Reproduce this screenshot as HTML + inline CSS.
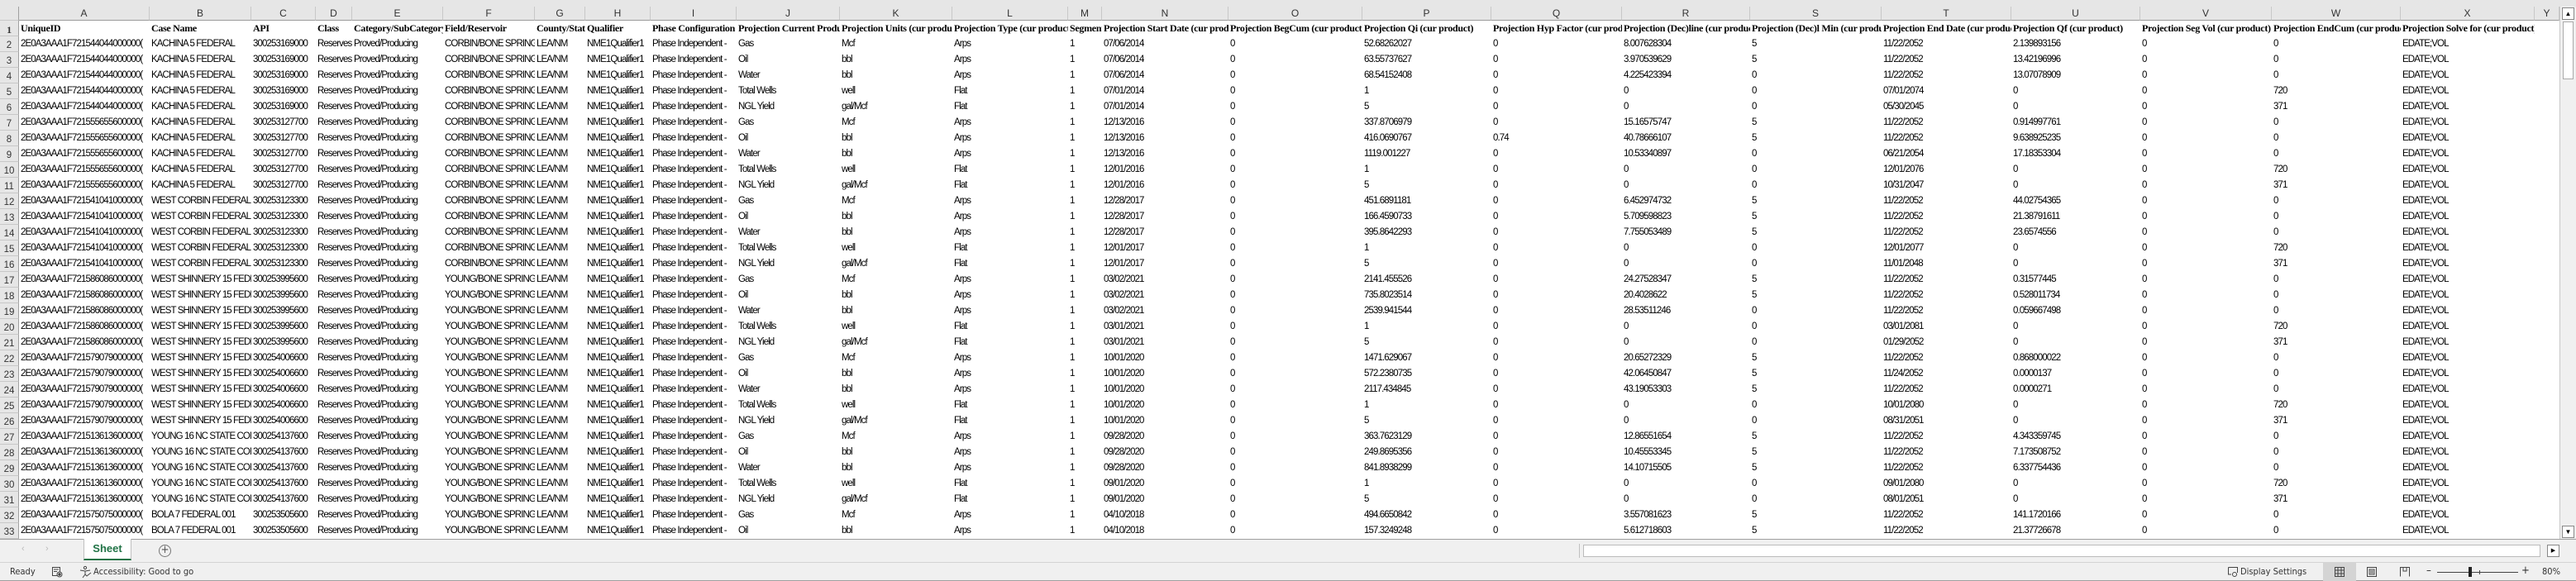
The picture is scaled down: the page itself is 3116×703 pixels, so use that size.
<!DOCTYPE html>
<html><head><meta charset="utf-8">
<style>
*{margin:0;padding:0;box-sizing:border-box}
html,body{width:3116px;height:703px;overflow:hidden;background:#fff;font-family:"Liberation Sans Narrow","Liberation Sans",sans-serif;font-stretch:condensed}
.top{position:absolute;left:0;top:0;width:3116px;height:8px;background:#e6e6e6}
.r{position:absolute;left:0;height:19px;display:flex;white-space:nowrap}
.r>div{overflow:hidden;height:19px;line-height:18px;font-size:11.5px;color:#000;padding-left:2px;letter-spacing:-0.9px}
.r>div:first-child{background:#e6e6e6;border-right:1px solid #a0a0a0;border-bottom:1px solid #c8c8c8;text-align:center;color:#333;padding:0;font-size:11.5px;line-height:22px;letter-spacing:0}
.hdr{top:8px;height:17px}
.hdr>div{background:#e6e6e6;text-align:center;border-right:1px solid #c8c8c8;border-bottom:1px solid #9b9b9b;height:17px!important;line-height:17px!important;font-size:12px!important;color:#333!important;padding:0!important;letter-spacing:0!important}
.h1>div{font-family:"Liberation Serif",serif;font-weight:bold;font-size:12px!important;font-stretch:normal;letter-spacing:-0.3px!important}
.c0{width:23px}.cA{width:158px}.cB{width:123px}.cC{width:78px}.cD{width:44px}.cE{width:110px}.cF{width:111px}.cG{width:61px}.cH{width:79px}.cI{width:104px}.cJ{width:125px}.cK{width:136px}.cL{width:140px}.cM{width:41px}.cN{width:153px}.cO{width:162px}.cP{width:156px}.cQ{width:158px}.cR{width:155px}.cS{width:159px}.cT{width:157px}.cU{width:156px}.cV{width:159px}.cW{width:156px}.cX{width:162px}.cY{width:30px}
.vs{position:absolute;left:3096px;top:8px;width:20px;height:644px;background:#f0f0f0;border-left:1px solid #c8c8c8}
.vs .b{position:absolute;left:2px;width:15px;height:15px;border:1px solid #888;background:#fff;font-size:8px;text-align:center;line-height:13px}
.tabbar{position:absolute;left:0;top:652px;width:3116px;height:28px;background:#f0f0f0;border-top:1px solid #a0a0a0}
.status{position:absolute;left:0;top:680px;width:3116px;height:23px;background:#f0f0f0;border-top:1px solid #d4d4d4;font-family:"DejaVu Sans",sans-serif;font-size:11px;color:#333;border-bottom:1px solid #a0a0a0}
.status span{position:absolute;top:4px}
</style></head><body>
<div class="top"></div>
<div class="r hdr"><div class="c0"></div><div class="cA">A</div><div class="cB">B</div><div class="cC">C</div><div class="cD">D</div><div class="cE">E</div><div class="cF">F</div><div class="cG">G</div><div class="cH">H</div><div class="cI">I</div><div class="cJ">J</div><div class="cK">K</div><div class="cL">L</div><div class="cM">M</div><div class="cN">N</div><div class="cO">O</div><div class="cP">P</div><div class="cQ">Q</div><div class="cR">R</div><div class="cS">S</div><div class="cT">T</div><div class="cU">U</div><div class="cV">V</div><div class="cW">W</div><div class="cX">X</div><div class="cY">Y</div></div>
<div class="r h1" style="top:25px"><div class="c0">1</div><div class="cA">UniqueID</div><div class="cB">Case Name</div><div class="cC">API</div><div class="cD">Class</div><div class="cE">Category/SubCategory</div><div class="cF">Field/Reservoir</div><div class="cG">County/State</div><div class="cH">Qualifier</div><div class="cI">Phase Configuration</div><div class="cJ">Projection Current Product</div><div class="cK">Projection Units (cur product)</div><div class="cL">Projection Type (cur product)</div><div class="cM">Segment</div><div class="cN">Projection Start Date (cur product)</div><div class="cO">Projection BegCum (cur product)</div><div class="cP">Projection Qi (cur product)</div><div class="cQ">Projection Hyp Factor (cur product)</div><div class="cR">Projection (Dec)line (cur product)</div><div class="cS">Projection (Dec)l Min (cur product)</div><div class="cT">Projection End Date (cur product)</div><div class="cU">Projection Qf (cur product)</div><div class="cV">Projection Seg Vol (cur product)</div><div class="cW">Projection EndCum (cur product)</div><div class="cX">Projection Solve for (cur product)</div><div class="cY"></div></div>

<div class="r" style="top:44px"><div class="c0">2</div><div class="cA">2E0A3AAA1F721544044000000(</div><div class="cB">KACHINA 5 FEDERAL</div><div class="cC">300253169000</div><div class="cD">Reserves</div><div class="cE">Proved/Producing</div><div class="cF">CORBIN/BONE SPRING</div><div class="cG">LEA/NM</div><div class="cH">NME1Qualifier1</div><div class="cI">Phase Independent - </div><div class="cJ">Gas</div><div class="cK">Mcf</div><div class="cL">Arps</div><div class="cM">1</div><div class="cN">07/06/2014</div><div class="cO">0</div><div class="cP">52.68262027</div><div class="cQ">0</div><div class="cR">8.007628304</div><div class="cS">5</div><div class="cT">11/22/2052</div><div class="cU">2.139893156</div><div class="cV">0</div><div class="cW">0</div><div class="cX">EDATE;VOL</div></div>
<div class="r" style="top:63px"><div class="c0">3</div><div class="cA">2E0A3AAA1F721544044000000(</div><div class="cB">KACHINA 5 FEDERAL</div><div class="cC">300253169000</div><div class="cD">Reserves</div><div class="cE">Proved/Producing</div><div class="cF">CORBIN/BONE SPRING</div><div class="cG">LEA/NM</div><div class="cH">NME1Qualifier1</div><div class="cI">Phase Independent - </div><div class="cJ">Oil</div><div class="cK">bbl</div><div class="cL">Arps</div><div class="cM">1</div><div class="cN">07/06/2014</div><div class="cO">0</div><div class="cP">63.55737627</div><div class="cQ">0</div><div class="cR">3.970539629</div><div class="cS">5</div><div class="cT">11/22/2052</div><div class="cU">13.42196996</div><div class="cV">0</div><div class="cW">0</div><div class="cX">EDATE;VOL</div></div>
<div class="r" style="top:82px"><div class="c0">4</div><div class="cA">2E0A3AAA1F721544044000000(</div><div class="cB">KACHINA 5 FEDERAL</div><div class="cC">300253169000</div><div class="cD">Reserves</div><div class="cE">Proved/Producing</div><div class="cF">CORBIN/BONE SPRING</div><div class="cG">LEA/NM</div><div class="cH">NME1Qualifier1</div><div class="cI">Phase Independent - </div><div class="cJ">Water</div><div class="cK">bbl</div><div class="cL">Arps</div><div class="cM">1</div><div class="cN">07/06/2014</div><div class="cO">0</div><div class="cP">68.54152408</div><div class="cQ">0</div><div class="cR">4.225423394</div><div class="cS">0</div><div class="cT">11/22/2052</div><div class="cU">13.07078909</div><div class="cV">0</div><div class="cW">0</div><div class="cX">EDATE;VOL</div></div>
<div class="r" style="top:101px"><div class="c0">5</div><div class="cA">2E0A3AAA1F721544044000000(</div><div class="cB">KACHINA 5 FEDERAL</div><div class="cC">300253169000</div><div class="cD">Reserves</div><div class="cE">Proved/Producing</div><div class="cF">CORBIN/BONE SPRING</div><div class="cG">LEA/NM</div><div class="cH">NME1Qualifier1</div><div class="cI">Phase Independent - </div><div class="cJ">Total Wells</div><div class="cK">well</div><div class="cL">Flat</div><div class="cM">1</div><div class="cN">07/01/2014</div><div class="cO">0</div><div class="cP">1</div><div class="cQ">0</div><div class="cR">0</div><div class="cS">0</div><div class="cT">07/01/2074</div><div class="cU">0</div><div class="cV">0</div><div class="cW">720</div><div class="cX">EDATE;VOL</div></div>
<div class="r" style="top:120px"><div class="c0">6</div><div class="cA">2E0A3AAA1F721544044000000(</div><div class="cB">KACHINA 5 FEDERAL</div><div class="cC">300253169000</div><div class="cD">Reserves</div><div class="cE">Proved/Producing</div><div class="cF">CORBIN/BONE SPRING</div><div class="cG">LEA/NM</div><div class="cH">NME1Qualifier1</div><div class="cI">Phase Independent - </div><div class="cJ">NGL Yield</div><div class="cK">gal/Mcf</div><div class="cL">Flat</div><div class="cM">1</div><div class="cN">07/01/2014</div><div class="cO">0</div><div class="cP">5</div><div class="cQ">0</div><div class="cR">0</div><div class="cS">0</div><div class="cT">05/30/2045</div><div class="cU">0</div><div class="cV">0</div><div class="cW">371</div><div class="cX">EDATE;VOL</div></div>
<div class="r" style="top:139px"><div class="c0">7</div><div class="cA">2E0A3AAA1F721555655600000(</div><div class="cB">KACHINA 5 FEDERAL</div><div class="cC">300253127700</div><div class="cD">Reserves</div><div class="cE">Proved/Producing</div><div class="cF">CORBIN/BONE SPRING</div><div class="cG">LEA/NM</div><div class="cH">NME1Qualifier1</div><div class="cI">Phase Independent - </div><div class="cJ">Gas</div><div class="cK">Mcf</div><div class="cL">Arps</div><div class="cM">1</div><div class="cN">12/13/2016</div><div class="cO">0</div><div class="cP">337.8706979</div><div class="cQ">0</div><div class="cR">15.16575747</div><div class="cS">5</div><div class="cT">11/22/2052</div><div class="cU">0.914997761</div><div class="cV">0</div><div class="cW">0</div><div class="cX">EDATE;VOL</div></div>
<div class="r" style="top:158px"><div class="c0">8</div><div class="cA">2E0A3AAA1F721555655600000(</div><div class="cB">KACHINA 5 FEDERAL</div><div class="cC">300253127700</div><div class="cD">Reserves</div><div class="cE">Proved/Producing</div><div class="cF">CORBIN/BONE SPRING</div><div class="cG">LEA/NM</div><div class="cH">NME1Qualifier1</div><div class="cI">Phase Independent - </div><div class="cJ">Oil</div><div class="cK">bbl</div><div class="cL">Arps</div><div class="cM">1</div><div class="cN">12/13/2016</div><div class="cO">0</div><div class="cP">416.0690767</div><div class="cQ">0.74</div><div class="cR">40.78666107</div><div class="cS">5</div><div class="cT">11/22/2052</div><div class="cU">9.638925235</div><div class="cV">0</div><div class="cW">0</div><div class="cX">EDATE;VOL</div></div>
<div class="r" style="top:177px"><div class="c0">9</div><div class="cA">2E0A3AAA1F721555655600000(</div><div class="cB">KACHINA 5 FEDERAL</div><div class="cC">300253127700</div><div class="cD">Reserves</div><div class="cE">Proved/Producing</div><div class="cF">CORBIN/BONE SPRING</div><div class="cG">LEA/NM</div><div class="cH">NME1Qualifier1</div><div class="cI">Phase Independent - </div><div class="cJ">Water</div><div class="cK">bbl</div><div class="cL">Arps</div><div class="cM">1</div><div class="cN">12/13/2016</div><div class="cO">0</div><div class="cP">1119.001227</div><div class="cQ">0</div><div class="cR">10.53340897</div><div class="cS">0</div><div class="cT">06/21/2054</div><div class="cU">17.18353304</div><div class="cV">0</div><div class="cW">0</div><div class="cX">EDATE;VOL</div></div>
<div class="r" style="top:196px"><div class="c0">10</div><div class="cA">2E0A3AAA1F721555655600000(</div><div class="cB">KACHINA 5 FEDERAL</div><div class="cC">300253127700</div><div class="cD">Reserves</div><div class="cE">Proved/Producing</div><div class="cF">CORBIN/BONE SPRING</div><div class="cG">LEA/NM</div><div class="cH">NME1Qualifier1</div><div class="cI">Phase Independent - </div><div class="cJ">Total Wells</div><div class="cK">well</div><div class="cL">Flat</div><div class="cM">1</div><div class="cN">12/01/2016</div><div class="cO">0</div><div class="cP">1</div><div class="cQ">0</div><div class="cR">0</div><div class="cS">0</div><div class="cT">12/01/2076</div><div class="cU">0</div><div class="cV">0</div><div class="cW">720</div><div class="cX">EDATE;VOL</div></div>
<div class="r" style="top:215px"><div class="c0">11</div><div class="cA">2E0A3AAA1F721555655600000(</div><div class="cB">KACHINA 5 FEDERAL</div><div class="cC">300253127700</div><div class="cD">Reserves</div><div class="cE">Proved/Producing</div><div class="cF">CORBIN/BONE SPRING</div><div class="cG">LEA/NM</div><div class="cH">NME1Qualifier1</div><div class="cI">Phase Independent - </div><div class="cJ">NGL Yield</div><div class="cK">gal/Mcf</div><div class="cL">Flat</div><div class="cM">1</div><div class="cN">12/01/2016</div><div class="cO">0</div><div class="cP">5</div><div class="cQ">0</div><div class="cR">0</div><div class="cS">0</div><div class="cT">10/31/2047</div><div class="cU">0</div><div class="cV">0</div><div class="cW">371</div><div class="cX">EDATE;VOL</div></div>
<div class="r" style="top:234px"><div class="c0">12</div><div class="cA">2E0A3AAA1F721541041000000(</div><div class="cB">WEST CORBIN FEDERAL</div><div class="cC">300253123300</div><div class="cD">Reserves</div><div class="cE">Proved/Producing</div><div class="cF">CORBIN/BONE SPRING</div><div class="cG">LEA/NM</div><div class="cH">NME1Qualifier1</div><div class="cI">Phase Independent - </div><div class="cJ">Gas</div><div class="cK">Mcf</div><div class="cL">Arps</div><div class="cM">1</div><div class="cN">12/28/2017</div><div class="cO">0</div><div class="cP">451.6891181</div><div class="cQ">0</div><div class="cR">6.452974732</div><div class="cS">5</div><div class="cT">11/22/2052</div><div class="cU">44.02754365</div><div class="cV">0</div><div class="cW">0</div><div class="cX">EDATE;VOL</div></div>
<div class="r" style="top:253px"><div class="c0">13</div><div class="cA">2E0A3AAA1F721541041000000(</div><div class="cB">WEST CORBIN FEDERAL</div><div class="cC">300253123300</div><div class="cD">Reserves</div><div class="cE">Proved/Producing</div><div class="cF">CORBIN/BONE SPRING</div><div class="cG">LEA/NM</div><div class="cH">NME1Qualifier1</div><div class="cI">Phase Independent - </div><div class="cJ">Oil</div><div class="cK">bbl</div><div class="cL">Arps</div><div class="cM">1</div><div class="cN">12/28/2017</div><div class="cO">0</div><div class="cP">166.4590733</div><div class="cQ">0</div><div class="cR">5.709598823</div><div class="cS">5</div><div class="cT">11/22/2052</div><div class="cU">21.38791611</div><div class="cV">0</div><div class="cW">0</div><div class="cX">EDATE;VOL</div></div>
<div class="r" style="top:272px"><div class="c0">14</div><div class="cA">2E0A3AAA1F721541041000000(</div><div class="cB">WEST CORBIN FEDERAL</div><div class="cC">300253123300</div><div class="cD">Reserves</div><div class="cE">Proved/Producing</div><div class="cF">CORBIN/BONE SPRING</div><div class="cG">LEA/NM</div><div class="cH">NME1Qualifier1</div><div class="cI">Phase Independent - </div><div class="cJ">Water</div><div class="cK">bbl</div><div class="cL">Arps</div><div class="cM">1</div><div class="cN">12/28/2017</div><div class="cO">0</div><div class="cP">395.8642293</div><div class="cQ">0</div><div class="cR">7.755053489</div><div class="cS">5</div><div class="cT">11/22/2052</div><div class="cU">23.6574556</div><div class="cV">0</div><div class="cW">0</div><div class="cX">EDATE;VOL</div></div>
<div class="r" style="top:291px"><div class="c0">15</div><div class="cA">2E0A3AAA1F721541041000000(</div><div class="cB">WEST CORBIN FEDERAL</div><div class="cC">300253123300</div><div class="cD">Reserves</div><div class="cE">Proved/Producing</div><div class="cF">CORBIN/BONE SPRING</div><div class="cG">LEA/NM</div><div class="cH">NME1Qualifier1</div><div class="cI">Phase Independent - </div><div class="cJ">Total Wells</div><div class="cK">well</div><div class="cL">Flat</div><div class="cM">1</div><div class="cN">12/01/2017</div><div class="cO">0</div><div class="cP">1</div><div class="cQ">0</div><div class="cR">0</div><div class="cS">0</div><div class="cT">12/01/2077</div><div class="cU">0</div><div class="cV">0</div><div class="cW">720</div><div class="cX">EDATE;VOL</div></div>
<div class="r" style="top:310px"><div class="c0">16</div><div class="cA">2E0A3AAA1F721541041000000(</div><div class="cB">WEST CORBIN FEDERAL</div><div class="cC">300253123300</div><div class="cD">Reserves</div><div class="cE">Proved/Producing</div><div class="cF">CORBIN/BONE SPRING</div><div class="cG">LEA/NM</div><div class="cH">NME1Qualifier1</div><div class="cI">Phase Independent - </div><div class="cJ">NGL Yield</div><div class="cK">gal/Mcf</div><div class="cL">Flat</div><div class="cM">1</div><div class="cN">12/01/2017</div><div class="cO">0</div><div class="cP">5</div><div class="cQ">0</div><div class="cR">0</div><div class="cS">0</div><div class="cT">11/01/2048</div><div class="cU">0</div><div class="cV">0</div><div class="cW">371</div><div class="cX">EDATE;VOL</div></div>
<div class="r" style="top:329px"><div class="c0">17</div><div class="cA">2E0A3AAA1F721586086000000(</div><div class="cB">WEST SHINNERY 15 FEDERAL</div><div class="cC">300253995600</div><div class="cD">Reserves</div><div class="cE">Proved/Producing</div><div class="cF">YOUNG/BONE SPRING</div><div class="cG">LEA/NM</div><div class="cH">NME1Qualifier1</div><div class="cI">Phase Independent - </div><div class="cJ">Gas</div><div class="cK">Mcf</div><div class="cL">Arps</div><div class="cM">1</div><div class="cN">03/02/2021</div><div class="cO">0</div><div class="cP">2141.455526</div><div class="cQ">0</div><div class="cR">24.27528347</div><div class="cS">5</div><div class="cT">11/22/2052</div><div class="cU">0.31577445</div><div class="cV">0</div><div class="cW">0</div><div class="cX">EDATE;VOL</div></div>
<div class="r" style="top:348px"><div class="c0">18</div><div class="cA">2E0A3AAA1F721586086000000(</div><div class="cB">WEST SHINNERY 15 FEDERAL</div><div class="cC">300253995600</div><div class="cD">Reserves</div><div class="cE">Proved/Producing</div><div class="cF">YOUNG/BONE SPRING</div><div class="cG">LEA/NM</div><div class="cH">NME1Qualifier1</div><div class="cI">Phase Independent - </div><div class="cJ">Oil</div><div class="cK">bbl</div><div class="cL">Arps</div><div class="cM">1</div><div class="cN">03/02/2021</div><div class="cO">0</div><div class="cP">735.8023514</div><div class="cQ">0</div><div class="cR">20.4028622</div><div class="cS">5</div><div class="cT">11/22/2052</div><div class="cU">0.528011734</div><div class="cV">0</div><div class="cW">0</div><div class="cX">EDATE;VOL</div></div>
<div class="r" style="top:367px"><div class="c0">19</div><div class="cA">2E0A3AAA1F721586086000000(</div><div class="cB">WEST SHINNERY 15 FEDERAL</div><div class="cC">300253995600</div><div class="cD">Reserves</div><div class="cE">Proved/Producing</div><div class="cF">YOUNG/BONE SPRING</div><div class="cG">LEA/NM</div><div class="cH">NME1Qualifier1</div><div class="cI">Phase Independent - </div><div class="cJ">Water</div><div class="cK">bbl</div><div class="cL">Arps</div><div class="cM">1</div><div class="cN">03/02/2021</div><div class="cO">0</div><div class="cP">2539.941544</div><div class="cQ">0</div><div class="cR">28.53511246</div><div class="cS">0</div><div class="cT">11/22/2052</div><div class="cU">0.059667498</div><div class="cV">0</div><div class="cW">0</div><div class="cX">EDATE;VOL</div></div>
<div class="r" style="top:386px"><div class="c0">20</div><div class="cA">2E0A3AAA1F721586086000000(</div><div class="cB">WEST SHINNERY 15 FEDERAL</div><div class="cC">300253995600</div><div class="cD">Reserves</div><div class="cE">Proved/Producing</div><div class="cF">YOUNG/BONE SPRING</div><div class="cG">LEA/NM</div><div class="cH">NME1Qualifier1</div><div class="cI">Phase Independent - </div><div class="cJ">Total Wells</div><div class="cK">well</div><div class="cL">Flat</div><div class="cM">1</div><div class="cN">03/01/2021</div><div class="cO">0</div><div class="cP">1</div><div class="cQ">0</div><div class="cR">0</div><div class="cS">0</div><div class="cT">03/01/2081</div><div class="cU">0</div><div class="cV">0</div><div class="cW">720</div><div class="cX">EDATE;VOL</div></div>
<div class="r" style="top:405px"><div class="c0">21</div><div class="cA">2E0A3AAA1F721586086000000(</div><div class="cB">WEST SHINNERY 15 FEDERAL</div><div class="cC">300253995600</div><div class="cD">Reserves</div><div class="cE">Proved/Producing</div><div class="cF">YOUNG/BONE SPRING</div><div class="cG">LEA/NM</div><div class="cH">NME1Qualifier1</div><div class="cI">Phase Independent - </div><div class="cJ">NGL Yield</div><div class="cK">gal/Mcf</div><div class="cL">Flat</div><div class="cM">1</div><div class="cN">03/01/2021</div><div class="cO">0</div><div class="cP">5</div><div class="cQ">0</div><div class="cR">0</div><div class="cS">0</div><div class="cT">01/29/2052</div><div class="cU">0</div><div class="cV">0</div><div class="cW">371</div><div class="cX">EDATE;VOL</div></div>
<div class="r" style="top:424px"><div class="c0">22</div><div class="cA">2E0A3AAA1F721579079000000(</div><div class="cB">WEST SHINNERY 15 FEDERAL</div><div class="cC">300254006600</div><div class="cD">Reserves</div><div class="cE">Proved/Producing</div><div class="cF">YOUNG/BONE SPRING</div><div class="cG">LEA/NM</div><div class="cH">NME1Qualifier1</div><div class="cI">Phase Independent - </div><div class="cJ">Gas</div><div class="cK">Mcf</div><div class="cL">Arps</div><div class="cM">1</div><div class="cN">10/01/2020</div><div class="cO">0</div><div class="cP">1471.629067</div><div class="cQ">0</div><div class="cR">20.65272329</div><div class="cS">5</div><div class="cT">11/22/2052</div><div class="cU">0.868000022</div><div class="cV">0</div><div class="cW">0</div><div class="cX">EDATE;VOL</div></div>
<div class="r" style="top:443px"><div class="c0">23</div><div class="cA">2E0A3AAA1F721579079000000(</div><div class="cB">WEST SHINNERY 15 FEDERAL</div><div class="cC">300254006600</div><div class="cD">Reserves</div><div class="cE">Proved/Producing</div><div class="cF">YOUNG/BONE SPRING</div><div class="cG">LEA/NM</div><div class="cH">NME1Qualifier1</div><div class="cI">Phase Independent - </div><div class="cJ">Oil</div><div class="cK">bbl</div><div class="cL">Arps</div><div class="cM">1</div><div class="cN">10/01/2020</div><div class="cO">0</div><div class="cP">572.2380735</div><div class="cQ">0</div><div class="cR">42.06450847</div><div class="cS">5</div><div class="cT">11/24/2052</div><div class="cU">0.0000137</div><div class="cV">0</div><div class="cW">0</div><div class="cX">EDATE;VOL</div></div>
<div class="r" style="top:462px"><div class="c0">24</div><div class="cA">2E0A3AAA1F721579079000000(</div><div class="cB">WEST SHINNERY 15 FEDERAL</div><div class="cC">300254006600</div><div class="cD">Reserves</div><div class="cE">Proved/Producing</div><div class="cF">YOUNG/BONE SPRING</div><div class="cG">LEA/NM</div><div class="cH">NME1Qualifier1</div><div class="cI">Phase Independent - </div><div class="cJ">Water</div><div class="cK">bbl</div><div class="cL">Arps</div><div class="cM">1</div><div class="cN">10/01/2020</div><div class="cO">0</div><div class="cP">2117.434845</div><div class="cQ">0</div><div class="cR">43.19053303</div><div class="cS">5</div><div class="cT">11/22/2052</div><div class="cU">0.0000271</div><div class="cV">0</div><div class="cW">0</div><div class="cX">EDATE;VOL</div></div>
<div class="r" style="top:481px"><div class="c0">25</div><div class="cA">2E0A3AAA1F721579079000000(</div><div class="cB">WEST SHINNERY 15 FEDERAL</div><div class="cC">300254006600</div><div class="cD">Reserves</div><div class="cE">Proved/Producing</div><div class="cF">YOUNG/BONE SPRING</div><div class="cG">LEA/NM</div><div class="cH">NME1Qualifier1</div><div class="cI">Phase Independent - </div><div class="cJ">Total Wells</div><div class="cK">well</div><div class="cL">Flat</div><div class="cM">1</div><div class="cN">10/01/2020</div><div class="cO">0</div><div class="cP">1</div><div class="cQ">0</div><div class="cR">0</div><div class="cS">0</div><div class="cT">10/01/2080</div><div class="cU">0</div><div class="cV">0</div><div class="cW">720</div><div class="cX">EDATE;VOL</div></div>
<div class="r" style="top:500px"><div class="c0">26</div><div class="cA">2E0A3AAA1F721579079000000(</div><div class="cB">WEST SHINNERY 15 FEDERAL</div><div class="cC">300254006600</div><div class="cD">Reserves</div><div class="cE">Proved/Producing</div><div class="cF">YOUNG/BONE SPRING</div><div class="cG">LEA/NM</div><div class="cH">NME1Qualifier1</div><div class="cI">Phase Independent - </div><div class="cJ">NGL Yield</div><div class="cK">gal/Mcf</div><div class="cL">Flat</div><div class="cM">1</div><div class="cN">10/01/2020</div><div class="cO">0</div><div class="cP">5</div><div class="cQ">0</div><div class="cR">0</div><div class="cS">0</div><div class="cT">08/31/2051</div><div class="cU">0</div><div class="cV">0</div><div class="cW">371</div><div class="cX">EDATE;VOL</div></div>
<div class="r" style="top:519px"><div class="c0">27</div><div class="cA">2E0A3AAA1F721513613600000(</div><div class="cB">YOUNG 16 NC STATE COM</div><div class="cC">300254137600</div><div class="cD">Reserves</div><div class="cE">Proved/Producing</div><div class="cF">YOUNG/BONE SPRING</div><div class="cG">LEA/NM</div><div class="cH">NME1Qualifier1</div><div class="cI">Phase Independent - </div><div class="cJ">Gas</div><div class="cK">Mcf</div><div class="cL">Arps</div><div class="cM">1</div><div class="cN">09/28/2020</div><div class="cO">0</div><div class="cP">363.7623129</div><div class="cQ">0</div><div class="cR">12.86551654</div><div class="cS">5</div><div class="cT">11/22/2052</div><div class="cU">4.343359745</div><div class="cV">0</div><div class="cW">0</div><div class="cX">EDATE;VOL</div></div>
<div class="r" style="top:538px"><div class="c0">28</div><div class="cA">2E0A3AAA1F721513613600000(</div><div class="cB">YOUNG 16 NC STATE COM</div><div class="cC">300254137600</div><div class="cD">Reserves</div><div class="cE">Proved/Producing</div><div class="cF">YOUNG/BONE SPRING</div><div class="cG">LEA/NM</div><div class="cH">NME1Qualifier1</div><div class="cI">Phase Independent - </div><div class="cJ">Oil</div><div class="cK">bbl</div><div class="cL">Arps</div><div class="cM">1</div><div class="cN">09/28/2020</div><div class="cO">0</div><div class="cP">249.8695356</div><div class="cQ">0</div><div class="cR">10.45553345</div><div class="cS">5</div><div class="cT">11/22/2052</div><div class="cU">7.173508752</div><div class="cV">0</div><div class="cW">0</div><div class="cX">EDATE;VOL</div></div>
<div class="r" style="top:557px"><div class="c0">29</div><div class="cA">2E0A3AAA1F721513613600000(</div><div class="cB">YOUNG 16 NC STATE COM</div><div class="cC">300254137600</div><div class="cD">Reserves</div><div class="cE">Proved/Producing</div><div class="cF">YOUNG/BONE SPRING</div><div class="cG">LEA/NM</div><div class="cH">NME1Qualifier1</div><div class="cI">Phase Independent - </div><div class="cJ">Water</div><div class="cK">bbl</div><div class="cL">Arps</div><div class="cM">1</div><div class="cN">09/28/2020</div><div class="cO">0</div><div class="cP">841.8938299</div><div class="cQ">0</div><div class="cR">14.10715505</div><div class="cS">5</div><div class="cT">11/22/2052</div><div class="cU">6.337754436</div><div class="cV">0</div><div class="cW">0</div><div class="cX">EDATE;VOL</div></div>
<div class="r" style="top:576px"><div class="c0">30</div><div class="cA">2E0A3AAA1F721513613600000(</div><div class="cB">YOUNG 16 NC STATE COM</div><div class="cC">300254137600</div><div class="cD">Reserves</div><div class="cE">Proved/Producing</div><div class="cF">YOUNG/BONE SPRING</div><div class="cG">LEA/NM</div><div class="cH">NME1Qualifier1</div><div class="cI">Phase Independent - </div><div class="cJ">Total Wells</div><div class="cK">well</div><div class="cL">Flat</div><div class="cM">1</div><div class="cN">09/01/2020</div><div class="cO">0</div><div class="cP">1</div><div class="cQ">0</div><div class="cR">0</div><div class="cS">0</div><div class="cT">09/01/2080</div><div class="cU">0</div><div class="cV">0</div><div class="cW">720</div><div class="cX">EDATE;VOL</div></div>
<div class="r" style="top:595px"><div class="c0">31</div><div class="cA">2E0A3AAA1F721513613600000(</div><div class="cB">YOUNG 16 NC STATE COM</div><div class="cC">300254137600</div><div class="cD">Reserves</div><div class="cE">Proved/Producing</div><div class="cF">YOUNG/BONE SPRING</div><div class="cG">LEA/NM</div><div class="cH">NME1Qualifier1</div><div class="cI">Phase Independent - </div><div class="cJ">NGL Yield</div><div class="cK">gal/Mcf</div><div class="cL">Flat</div><div class="cM">1</div><div class="cN">09/01/2020</div><div class="cO">0</div><div class="cP">5</div><div class="cQ">0</div><div class="cR">0</div><div class="cS">0</div><div class="cT">08/01/2051</div><div class="cU">0</div><div class="cV">0</div><div class="cW">371</div><div class="cX">EDATE;VOL</div></div>
<div class="r" style="top:614px"><div class="c0">32</div><div class="cA">2E0A3AAA1F721575075000000(</div><div class="cB">BOLA 7 FEDERAL 001</div><div class="cC">300253505600</div><div class="cD">Reserves</div><div class="cE">Proved/Producing</div><div class="cF">YOUNG/BONE SPRING</div><div class="cG">LEA/NM</div><div class="cH">NME1Qualifier1</div><div class="cI">Phase Independent - </div><div class="cJ">Gas</div><div class="cK">Mcf</div><div class="cL">Arps</div><div class="cM">1</div><div class="cN">04/10/2018</div><div class="cO">0</div><div class="cP">494.6650842</div><div class="cQ">0</div><div class="cR">3.557081623</div><div class="cS">5</div><div class="cT">11/22/2052</div><div class="cU">141.1720166</div><div class="cV">0</div><div class="cW">0</div><div class="cX">EDATE;VOL</div></div>
<div class="r" style="top:633px"><div class="c0">33</div><div class="cA">2E0A3AAA1F721575075000000(</div><div class="cB">BOLA 7 FEDERAL 001</div><div class="cC">300253505600</div><div class="cD">Reserves</div><div class="cE">Proved/Producing</div><div class="cF">YOUNG/BONE SPRING</div><div class="cG">LEA/NM</div><div class="cH">NME1Qualifier1</div><div class="cI">Phase Independent - </div><div class="cJ">Oil</div><div class="cK">bbl</div><div class="cL">Arps</div><div class="cM">1</div><div class="cN">04/10/2018</div><div class="cO">0</div><div class="cP">157.3249248</div><div class="cQ">0</div><div class="cR">5.612718603</div><div class="cS">5</div><div class="cT">11/22/2052</div><div class="cU">21.37726678</div><div class="cV">0</div><div class="cW">0</div><div class="cX">EDATE;VOL</div></div>

<div class="vs"><div class="b" style="top:1px">&#9650;</div><div style="position:absolute;left:3px;top:18px;width:13px;height:70px;background:#fff;border:1px solid #aaa"></div><div class="b" style="top:628px">&#9660;</div></div>

<div class="tabbar">
 <span style="position:absolute;left:26px;top:5px;color:#bbb;font-size:11px">&#8249;</span>
 <span style="position:absolute;left:55px;top:5px;color:#bbb;font-size:11px">&#8250;</span>
 <div style="position:absolute;left:101px;top:-1px;width:58px;height:26px;background:#fff;border-left:1px solid #c0c0c0;border-right:1px solid #c0c0c0;border-bottom:2px solid #217346;text-align:center;line-height:24px;font-family:'Liberation Sans',sans-serif;font-weight:bold;font-size:13px;color:#217346">Sheet</div>
 <div style="position:absolute;left:192px;top:6px;width:15px;height:15px;border:1px solid #777;border-radius:50%;text-align:center;line-height:12px;font-size:13px;color:#555;font-family:'DejaVu Sans',sans-serif">+</div>
 <div style="position:absolute;left:1910px;top:5px;width:1px;height:17px;background:#c0c0c0"></div>
 <div style="position:absolute;left:1915px;top:6px;width:1158px;height:15px;background:#fff;border:1px solid #bbb"></div>
 <div style="position:absolute;left:3081px;top:6px;width:15px;height:15px;background:#fff;border:1px solid #888;font-size:7px;text-align:center;line-height:13px">&#9654;</div>
</div>

<div class="status">
 <span style="left:12px">Ready</span>
 <svg style="position:absolute;left:62px;top:4px" width="14" height="14" viewBox="0 0 14 14" fill="none" stroke="#444" stroke-width="1"><rect x="1.5" y="1.5" width="9" height="10"/><line x1="3" y1="4" x2="9" y2="4"/><line x1="3" y1="6.5" x2="7" y2="6.5"/><circle cx="10" cy="10" r="3" fill="#f0f0f0"/><circle cx="10" cy="10" r="1.2" fill="#444"/></svg>
 <svg style="position:absolute;left:95px;top:3px" width="16" height="16" viewBox="0 0 16 16" fill="none" stroke="#444" stroke-width="1"><circle cx="8" cy="3" r="1.6"/><path d="M2 6 L8 7 L14 6 M8 7 L8 11 L5 15 M8 11 L10 13 L15 9"/></svg>
 <span style="left:113px">Accessibility: Good to go</span>
 <svg style="position:absolute;left:2694px;top:4px" width="14" height="14" viewBox="0 0 14 14" fill="none" stroke="#444" stroke-width="1"><path d="M1.5 1.5 H12.5 V8"/><path d="M1.5 1.5 V10 H5"/><circle cx="9" cy="10" r="2.5"/></svg>
 <span style="left:2710px">Display Settings</span>
 <div style="position:absolute;left:2810px;top:0;width:40px;height:22px;background:#d4d4d4"></div>
 <svg style="position:absolute;left:2823px;top:4px" width="14" height="14" viewBox="0 0 14 14" fill="none" stroke="#444" stroke-width="1"><rect x="1.5" y="1.5" width="11" height="11"/><path d="M5 1.5V12.5M9 1.5V12.5M1.5 5H12.5M1.5 9H12.5"/></svg>
 <svg style="position:absolute;left:2862px;top:4px" width="14" height="14" viewBox="0 0 14 14" fill="none" stroke="#444" stroke-width="1"><rect x="1.5" y="1.5" width="11" height="11"/><rect x="4" y="4" width="6" height="6"/><path d="M5 6H9M5 8H9"/></svg>
 <svg style="position:absolute;left:2902px;top:4px" width="14" height="14" viewBox="0 0 14 14" fill="none" stroke="#444" stroke-width="1"><path d="M1.5 12.5V1.5H12.5V12.5M5 1.5V6H9V1.5"/></svg>
 <span style="left:2935px;top:2px;font-size:13px">&#8211;</span>
 <div style="position:absolute;left:2948px;top:11px;width:98px;height:1px;background:#444"></div>
 <div style="position:absolute;left:2986px;top:5px;width:4px;height:12px;background:#222"></div>
 <div style="position:absolute;left:2999px;top:9px;width:1px;height:5px;background:#444"></div>
 <span style="left:3050px;top:2px;font-size:13px">+</span>
 <span style="left:3075px">80%</span>
</div>
</body></html>
